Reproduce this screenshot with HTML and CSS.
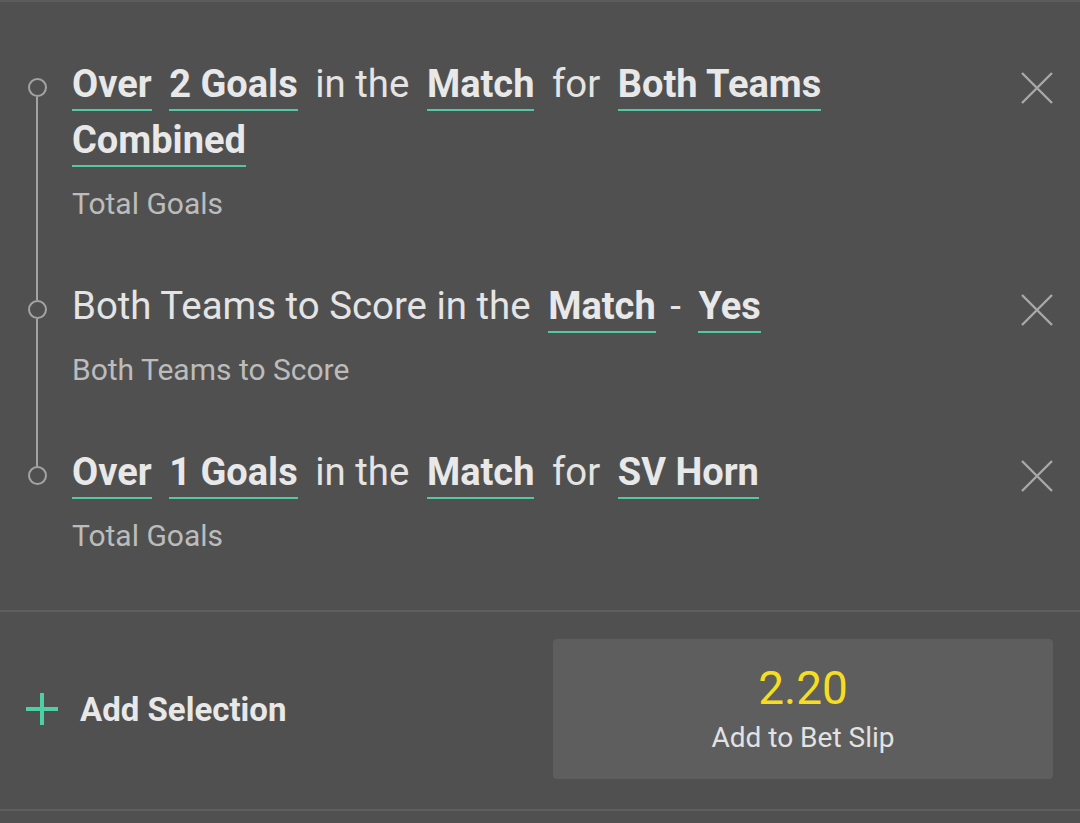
FILE: index.html
```html
<!DOCTYPE html>
<html lang="en">
<head>
<meta charset="utf-8">
<title>Bet Builder</title>
<link rel="stylesheet" href="styles.css">
</head>
<body>
<div class="panel">
  <div class="selections">
    <div class="sel">
      <div class="sel-text">
        <div class="title"><span class="opt first">Over</span> <span class="opt">2 Goals</span> <span class="conn">in the</span> <span class="opt">Match</span> <span class="conn">for</span> <span class="opt">Both Teams Combined</span></div>
        <div class="market">Total Goals</div>
      </div>
      <svg class="close" viewBox="0 0 34 34" width="34" height="34"><path d="M2 2 L32 32 M32 2 L2 32"/></svg>
    </div>
    <div class="sel">
      <div class="sel-text">
        <div class="title"><span class="conn first">Both Teams to Score in the</span> <span class="opt">Match</span> <span class="dash">-</span> <span class="opt">Yes</span></div>
        <div class="market">Both Teams to Score</div>
      </div>
      <svg class="close" viewBox="0 0 34 34" width="34" height="34"><path d="M2 2 L32 32 M32 2 L2 32"/></svg>
    </div>
    <div class="sel last">
      <div class="sel-text">
        <div class="title"><span class="opt first">Over</span> <span class="opt">1 Goals</span> <span class="conn">in the</span> <span class="opt">Match</span> <span class="conn">for</span> <span class="opt">SV Horn</span></div>
        <div class="market">Total Goals</div>
      </div>
      <svg class="close" viewBox="0 0 34 34" width="34" height="34"><path d="M2 2 L32 32 M32 2 L2 32"/></svg>
    </div>
  </div>
  <div class="footer">
    <div class="add">
      <svg class="plus" viewBox="0 0 32 32" width="32" height="32"><path d="M16 0 V32 M0 16 H32"/></svg>
      <span>Add Selection</span>
    </div>
    <div class="betslip">
      <div class="odds">2.20</div>
      <div class="bs-label">Add to Bet Slip</div>
    </div>
  </div>
</div>
</body>
</html>
```

FILE: styles.css
```css
html, body {
  margin: 0;
  padding: 0;
  background: #505050;
}
body {
  font-family: Roboto, "Noto Sans", sans-serif;
  color: #e6e6e6;
  width: 1080px;
  height: 823px;
  overflow: hidden;
}
.panel {
  border-top: 2px solid #5c5c5c;
}
.selections {
  display: flex;
  flex-direction: column;
  gap: 56px;
  padding: 54px 0 56px 0;
}
.sel {
  position: relative;
  display: flex;
  align-items: flex-start;
  padding: 0 26px 0 72px;
}
.sel::before {
  content: "";
  position: absolute;
  left: 28px;
  top: 22px;
  width: 15px;
  height: 15px;
  border: 2px solid #a3a3a3;
  border-radius: 50%;
}
.sel::after {
  content: "";
  position: absolute;
  left: 36px;
  width: 2px;
  top: 41px;
  bottom: -78px;
  background: #a3a3a3;
}
.sel.last::after {
  display: none;
}
.sel-text {
  flex: 1;
  padding-right: 40px;
}
.title {
  font-size: 38.4px;
  line-height: 56px;
  color: #e4e4e4;
}
.conn {
  margin: 0 4px;
}
.dash {
  margin: 0 4px 0 1px;
}
.opt {
  font-weight: 700;
  font-size: 38px;
  color: #e8e8e8;
  margin: 0 4px;
  padding-bottom: 3px;
  border-bottom: 2px solid #52c9a3;
}
.first {
  margin-left: 0;
}
.market {
  margin-top: 18px;
  font-size: 30px;
  line-height: 36px;
  color: #bcbcbc;
}
.close {
  flex: none;
  margin-top: 15px;
  stroke: #a8a8a8;
  stroke-width: 2.4;
  fill: none;
}
.footer {
  display: flex;
  align-items: center;
  justify-content: space-between;
  padding: 27px 27px 30px 26px;
  border-top: 2px solid #5e5e5e;
  border-bottom: 2px solid #5e5e5e;
}
.add {
  display: flex;
  align-items: center;
  gap: 22px;
  font-size: 33px;
  font-weight: 700;
  color: #e8e8e8;
}
.plus {
  stroke: #4fcfa4;
  stroke-width: 4;
  fill: none;
}
.betslip {
  width: 500px;
  height: 140px;
  box-sizing: border-box;
  background: #5e5e5e;
  border-radius: 4px;
  display: flex;
  flex-direction: column;
  align-items: center;
  justify-content: center;
  gap: 8px;
}
.odds {
  font-size: 46px;
  line-height: 50px;
  color: #f5dd22;
}
.bs-label {
  font-size: 28px;
  line-height: 34px;
  color: #e2e2e2;
}
```
